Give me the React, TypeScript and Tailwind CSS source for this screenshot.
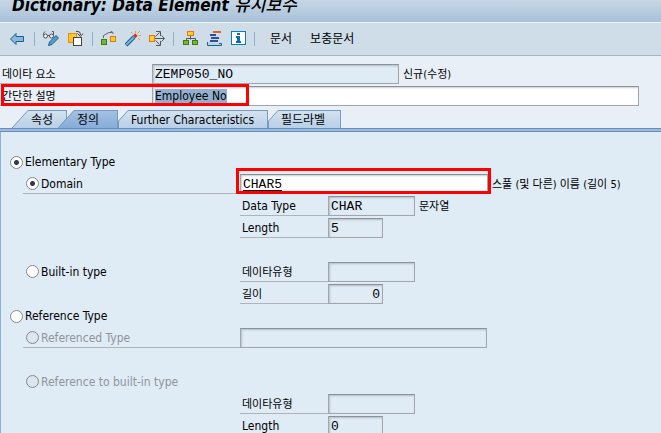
import React, { useEffect, useRef } from 'react';

const SANS = "font-['DejaVu_Sans_Condensed','Noto_Sans_CJK_KR',sans-serif]";

interface IconButtonProps {
  label: string;
  children: React.ReactNode;
}

const IconButton: React.FC<IconButtonProps> = ({ label, children }) => (
  <button aria-label={label} title={label} className="h-4 w-4 shrink-0">
    <svg width="16" height="16" viewBox="0 0 16 16" fill="none">
      {children}
    </svg>
  </button>
);

const Separator = () => <span className="h-[14px] w-px shrink-0 bg-[#93afd0]" />;

const Toolbar = () => (
  <div className="flex h-[33px] shrink-0 items-center border-b border-[#a3b4c4] bg-[#cfdde8] pl-[10px]">
    <div className="flex items-center gap-2">
      <IconButton label="Back">
        <path d="M.5 8 6 2.5V5.5H13.5V10.5H6V13.5Z" fill="#8fb5da" stroke="#17638f" />
      </IconButton>
      <Separator />
      <div className="flex items-center gap-[9px]">
        <IconButton label="Display / Change">
          <path d="M.5 4V2.500L2 .5M9 .5H10.500V4" stroke="#555" />
          <circle cx="2.500" cy="5" r="2" fill="#edf2f6" stroke="#555" />
          <circle cx="8.500" cy="5" r="2" fill="#edf2f6" stroke="#555" />
          <path d="M4.500 4.500H6.500" stroke="#555" />
          <path d="M13 4.500 15.500 7 9 13.500 5.500 14.500 6.500 11Z" fill="#5b9bc8" stroke="#17638f" />
        </IconButton>
        <IconButton label="Other object">
          <rect x=".5" y="2.500" width="8" height="9" fill="#ffc62a" stroke="#f08a00" />
          <path d="M8 .5H10Q12.500 .5 12.500 4M9.500 2.500 12.500 5.500 15 2.500" stroke="#444" />
          <rect x="5.500" y="6.500" width="8" height="8" fill="#fff" stroke="#444" />
        </IconButton>
      </div>
      <Separator />
      <div className="flex items-center gap-2">
        <IconButton label="Check">
          <path d="M2.500 7V4.500L6 2.500 8 1.500H11.500M9.500 0 12 1.500V3" stroke="#666" />
          <rect x=".5" y="8.500" width="5" height="5" fill="#76b82a" stroke="#3d7c1c" />
          <rect x="9.500" y="5.500" width="5" height="5" fill="#ffd21f" stroke="#e8731a" />
        </IconButton>
        <IconButton label="Activate">
          <path d="M1 14 9 6" stroke="#17638f" strokeWidth="4" />
          <path d="M1.500 13.500 8.500 6.500" stroke="#7fb2dc" strokeWidth="2" />
          <path d="M8 4.500 10.500 7 12.500 5 10.500 2.500Z" fill="#d8262c" />
          <path d="M7.500 2.500 6 1M10.500 2V0M12.500 2.500 15 0M14 4.500H16M13 7 15 9" stroke="#f39a1e" />
        </IconButton>
        <IconButton label="Where-used list">
          <path
            d="M6 7.500H15.500M12.500 4.500 15.500 7.500 12.500 10.500M6.500 5.500 10.500 1.500M7 .5H11.500V5M6.500 9.500 10.500 13.500M7 14.500H11.500V10"
            stroke="#555"
          />
          <rect x=".5" y="4.500" width="5" height="6" fill="#ffd21f" stroke="#e8731a" />
        </IconButton>
      </div>
      <Separator />
      <div className="flex items-center gap-2">
        <IconButton label="Hierarchy">
          <path d="M8.500 5V8.500M4.500 10V7.500H13.500V10" stroke="#555" />
          <rect x="5.500" y=".5" width="6" height="4" fill="#ffd21f" stroke="#e8731a" />
          <rect x="1.500" y="9.500" width="5" height="4" fill="#76b82a" stroke="#3d7c1c" />
          <rect x="10.500" y="9.500" width="5" height="4" fill="#76b82a" stroke="#3d7c1c" />
        </IconButton>
        <IconButton label="Append structure">
          <path d="M7 1H15" stroke="#e0642a" strokeWidth="2" />
          <path d="M4 4H10M5 7H13M4 10H12" stroke="#2f4f9a" strokeWidth="2" />
          <path d="M1.500 11V14.500H15.500V12.500H13" fill="#b9d2ea" stroke="#17638f" />
        </IconButton>
        <IconButton label="Information">
          <rect x="1.500" y=".5" width="14" height="13" fill="#fff" stroke="#0a7dbb" />
          <path d="M7 2H10V4H7ZM6 5H10V10H11V12H6V10H7V7H6Z" fill="#0a6fae" />
        </IconButton>
      </div>
      <Separator />
    </div>
    <button className="ml-[15px] text-[12px] whitespace-nowrap">문서</button>
    <button className="ml-[18px] text-[12px] whitespace-nowrap">보충문서</button>
  </div>
);

interface TabProps {
  id: string;
  label: string;
  width: string;
  active?: boolean;
  wide?: boolean;
}

const Tab: React.FC<TabProps> = ({ id, label, width, active, wide }) => {
  const w = wide ? 16 : 10;
  const edge = wide ? 'M0 18 16 .5' : 'M.5 18V11L10 .5';
  const shape = wide ? 'M0 18 16 0V18Z' : 'M0 18V11L10 0V18Z';
  return (
    <button role="tab" aria-selected={!!active} className={`flex h-[18px] ${active ? '-ml-[9px]' : ''}`}>
      <svg width={w} height="18" viewBox={`0 0 ${w} 18`} className="shrink-0">
        <linearGradient id={id} x1="0" y1="0" x2="0" y2="1">
          <stop offset="0" stopColor={active ? '#a3c0e2' : '#d3e2f0'} />
          <stop offset="1" stopColor={active ? '#86acd9' : '#b8cfe6'} />
        </linearGradient>
        <path d={shape} fill={`url(#${id})`} />
        <path d={edge} fill="none" stroke="#7a9abb" />
      </svg>
      <span
        className={`flex h-[18px] items-center border-t border-r border-[#7a9abb] bg-linear-to-b pl-[3px] text-[12px] whitespace-nowrap ${width} ${
          active ? 'from-[#a3c0e2] to-[#86acd9]' : 'from-[#d3e2f0] to-[#b8cfe6]'
        }`}
      >
        {label}
      </span>
    </button>
  );
};

const FIELD =
  'h-5 shrink-0 border border-[#a2a6aa] border-t-[#8d9195] px-[2px] shadow-[inset_1px_1px_2px_rgba(90,110,130,0.35)] outline-none';
const MONO = "font-['Liberation_Mono','Noto_Sans_CJK_KR',monospace] text-[13px]";
const KOREAN = 'pt-[3px] text-[11px]';

interface DetailProps {
  id: string;
  label: string;
  korean?: boolean;
  width: string;
  value?: string;
  right?: boolean;
  note?: string;
}

// label with an underline, followed by a read-only box
const Detail: React.FC<DetailProps> = ({ id, label, korean, width, value = '', right, note }) => (
  <>
    <label
      htmlFor={id}
      className={`flex h-5 w-[88px] shrink-0 items-center border-b border-[#aeb4ba] pl-[2px] ${korean ? KOREAN : 'text-[12px]'}`}
    >
      {label}
    </label>
    <input
      id={id}
      readOnly
      defaultValue={value}
      className={`${FIELD} ${MONO} bg-[#dfebf5] ${width} ${right ? 'text-right' : ''}`}
    />
    {note && <span className={`pl-1 whitespace-nowrap ${KOREAN}`}>{note}</span>}
  </>
);

interface ChoiceProps {
  name: string;
  label: string;
  checked?: boolean;
  disabled?: boolean;
}

const Choice: React.FC<ChoiceProps> = ({ name, label, checked, disabled }) => (
  <label className={`flex items-center gap-[2px] text-[12px] whitespace-nowrap ${disabled ? 'text-[#8f959c]' : ''}`}>
    <input
      type="radio"
      name={name}
      defaultChecked={checked}
      disabled={disabled}
      className="h-[13px] w-[13px] shrink-0 appearance-none rounded-full border border-[#85898e] bg-white checked:bg-[radial-gradient(circle,#33364f_2px,#fff_3px)] disabled:bg-[#dbe6ef]"
    />
    {label}
  </label>
);

const Row: React.FC<{ children?: React.ReactNode }> = ({ children }) => (
  <div className="flex h-[22px] items-center">{children}</div>
);

const Indent: React.FC<{ line?: boolean; children?: React.ReactNode }> = ({ line, children }) => (
  <div
    className={`ml-[22px] flex h-5 w-[217px] shrink-0 items-center border-b pl-[3px] ${line ? 'border-[#aeb4ba]' : 'border-transparent'}`}
  >
    {children}
  </div>
);

export default function App() {
  const description = useRef<HTMLInputElement>(null);

  useEffect(() => {
    description.current?.focus();
    description.current?.select();
  }, []);

  return (
    <div className={`flex h-screen flex-col overflow-hidden bg-[#e8eff6] text-black ${SANS}`}>
      <header className="h-[23px] shrink-0 border-b border-[#edf3f8] bg-linear-to-b from-[#c6d7e5] to-[#a9c1da] pl-3">
        <h1 className="text-[17px] leading-[10px] font-bold whitespace-nowrap italic">
          Dictionary: Data Element <span className="font-medium">유지보수</span>
        </h1>
      </header>
      <Toolbar />

      <div className="flex shrink-0 flex-col gap-[2px] pt-2">
        <div className="flex items-center">
          <label htmlFor="element" className={`flex h-5 w-[152px] shrink-0 items-center border-b border-[#aeb4ba] pl-[2px] ${KOREAN}`}>
            데이타 요소
          </label>
          <input id="element" readOnly defaultValue="ZEMP050_NO" className={`${FIELD} ${MONO} w-[247px] bg-[#dfebf5]`} />
          <span className={`pl-1 whitespace-nowrap ${KOREAN}`}>신규(수정)</span>
        </div>
        <div className="relative flex items-center pr-[22px]">
          <label htmlFor="description" className={`flex h-5 w-[152px] shrink-0 items-center border-b border-[#aeb4ba] pl-[2px] ${KOREAN}`}>
            간단한 설명
          </label>
          <input
            id="description"
            ref={description}
            defaultValue="Employee No"
            className={`${FIELD} min-w-0 flex-1 bg-white text-[12px] selection:bg-[#93afcf] selection:text-black`}
          />
          <div className="pointer-events-none absolute -top-[2px] left-px h-[22px] w-[248px] border-3 border-[#ff0000]" />
        </div>
      </div>

      <div role="tablist" className="flex shrink-0 pt-1 pl-3">
        <Tab id="tab-attributes" label="속성" width="w-[39px]" wide />
        <Tab id="tab-definition" label="정의" width="w-[44px]" wide active />
        <Tab id="tab-further" label="Further Characteristics" width="w-[140px]" />
        <Tab id="tab-labels" label="필드라벨" width="w-[63px]" />
      </div>
      <div className="h-1 shrink-0 border-y border-[#678db8] bg-[#9bbbe0]" />

      <main className="flex-1 border-l border-[#8fb0d6] bg-[#dfebf5] pt-[19px]">
        <Row>
          <div className="pl-[9px]">
            <Choice name="category" label="Elementary Type" checked />
          </div>
        </Row>
        <Row>
          <Indent line>
            <Choice name="type" label="Domain" checked />
          </Indent>
          <div className="relative flex">
            <input
              aria-label="Domain name"
              defaultValue="CHAR5"
              className={`${FIELD} ${MONO} w-[248px] bg-white underline underline-offset-2`}
            />
            <div className="pointer-events-none absolute -top-[6px] -left-1 h-[26px] w-[255px] border-3 border-[#ff0000]" />
          </div>
          <span className={`pl-1 whitespace-nowrap ${KOREAN}`}>스풀 (및 다른) 이름 (길이 5)</span>
        </Row>
        <Row>
          <Indent />
          <Detail id="domain-type" label="Data Type" width="w-[87px]" value="CHAR" note="문자열" />
        </Row>
        <Row>
          <Indent />
          <Detail id="domain-length" label="Length" width="w-[55px]" value="5" />
        </Row>
        <Row />
        <Row>
          <Indent>
            <Choice name="type" label="Built-in type" />
          </Indent>
          <Detail id="builtin-type" label="데이타유형" korean width="w-[87px]" />
        </Row>
        <Row>
          <Indent />
          <Detail id="builtin-length" label="길이" korean width="w-[55px]" value="0" right />
        </Row>
        <Row>
          <div className="pl-[9px]">
            <Choice name="category" label="Reference Type" />
          </div>
        </Row>
        <Row>
          <Indent line>
            <Choice name="reference" label="Referenced Type" disabled />
          </Indent>
          <input aria-label="Referenced Type name" readOnly className={`${FIELD} ${MONO} w-[247px] bg-[#dfebf5]`} />
        </Row>
        <Row />
        <Row>
          <Indent>
            <Choice name="reference" label="Reference to built-in type" disabled />
          </Indent>
        </Row>
        <Row>
          <Indent />
          <Detail id="reference-type" label="데이타유형" korean width="w-[87px]" />
        </Row>
        <Row>
          <Indent />
          <Detail id="reference-length" label="Length" width="w-[55px]" value="0" />
        </Row>
      </main>
    </div>
  );
}
